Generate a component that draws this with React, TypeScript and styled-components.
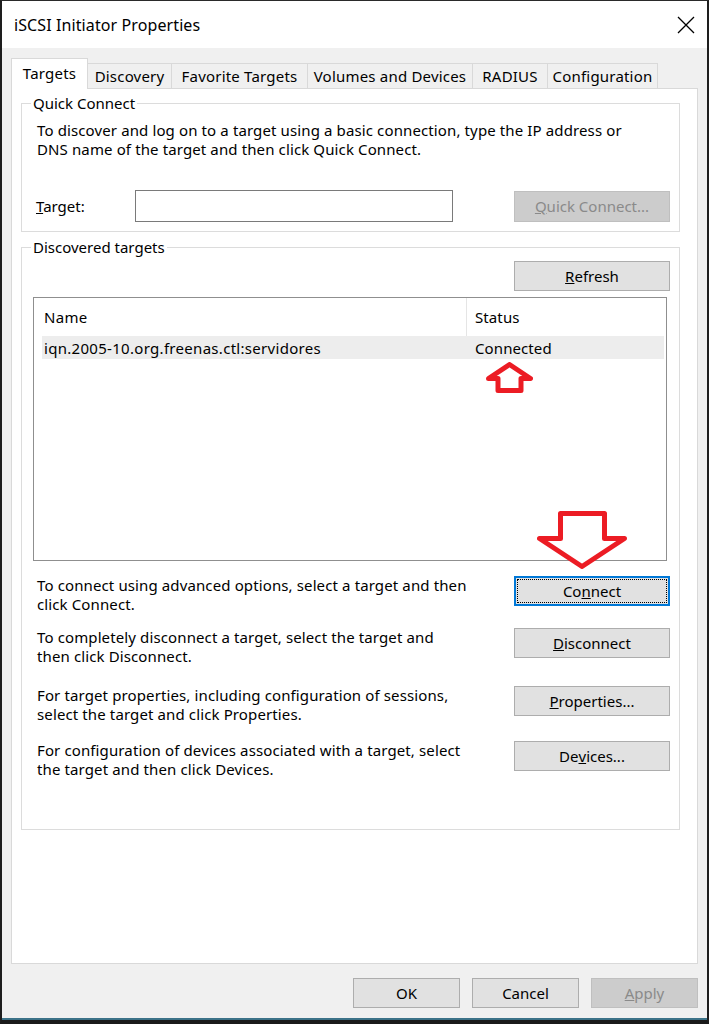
import React from 'react';
import styled, { createGlobalStyle, css } from 'styled-components';

const FONT = `"Noto Sans", "Liberation Sans", Arial, sans-serif`;

const GlobalStyle = createGlobalStyle`
  html, body {
    margin: 0;
    padding: 0;
    background: #ffffff;
  }
  body {
    font-family: ${FONT};
    color: #000000;
  }
  * {
    box-sizing: border-box;
  }
`;

const tabs = [
  { label: 'Targets', width: 77, active: true },
  { label: 'Discovery', width: 84 },
  { label: 'Favorite Targets', width: 136 },
  { label: 'Volumes and Devices', width: 165 },
  { label: 'RADIUS', width: 75 },
  { label: 'Configuration', width: 110 },
];

const actions = [
  {
    lines: ['To connect using advanced options, select a target and then', 'click Connect.'],
    button: (
      <>
        Co<u>n</u>nect
      </>
    ),
    focused: true,
    top: 15,
  },
  {
    lines: ['To completely disconnect a target, select the target and', 'then click Disconnect.'],
    button: (
      <>
        <u>D</u>isconnect
      </>
    ),
    top: 14,
  },
  {
    lines: ['For target properties, including configuration of sessions,', 'select the target and click Properties.'],
    button: (
      <>
        <u>P</u>roperties...
      </>
    ),
    top: 20,
  },
  {
    lines: ['For configuration of devices associated with a target, select', 'the target and then click Devices.'],
    button: (
      <>
        De<u>v</u>ices...
      </>
    ),
    top: 17,
  },
];

function UpArrow() {
  return (
    <svg width="47" height="31" viewBox="0 0 47 31">
      <path
        d="M23.5 2.5 L44.5 16.5 L35 16.5 L35 28.5 L12 28.5 L12 16.5 L2.5 16.5 Z"
        fill="#ffffff"
        stroke="#ec1c24"
        strokeWidth="5"
        strokeLinejoin="round"
      />
    </svg>
  );
}

function DownArrow() {
  return (
    <svg width="90" height="58" viewBox="0 0 90 58">
      <path
        d="M23.5 2.5 L67.5 2.5 L67.5 27.5 L87.5 27.5 L45 55.5 L2.5 27.5 L23.5 27.5 Z"
        fill="#ffffff"
        stroke="#ec1c24"
        strokeWidth="5"
        strokeLinejoin="round"
      />
    </svg>
  );
}

function App() {
  return (
    <>
      <GlobalStyle />
      <Window>
        <TitleBar>
          <Title>iSCSI Initiator Properties</Title>
          <CloseIcon width="18" height="18" viewBox="0 0 18 18">
            <path d="M1 1 L17 17 M17 1 L1 17" stroke="#000000" strokeWidth="1.3" fill="none" />
          </CloseIcon>
        </TitleBar>

        <Body>
          <TabStrip>
            {tabs.map((t) => (
              <Tab key={t.label} $active={!!t.active} $w={t.width}>
                {t.label}
              </Tab>
            ))}
          </TabStrip>

          <TabPanel>
            <GroupBox>
              <Legend>Quick Connect</Legend>
              <Description>
                To discover and log on to a target using a basic connection, type the IP address or
                <br />
                DNS name of the target and then click Quick Connect.
              </Description>
              <TargetRow>
                <FieldLabel>
                  <u>T</u>arget:
                </FieldLabel>
                <TextInput />
                <Spacer />
                <Button $disabled $h={31}>
                  <u>Q</u>uick Connect...
                </Button>
              </TargetRow>
            </GroupBox>

            <DiscoveredGroup>
              <Legend>Discovered targets</Legend>
              <RefreshRow>
                <Button>
                  <u>R</u>efresh
                </Button>
              </RefreshRow>

              <ListBox>
                <ListHeader>
                  <NameCell $header>Name</NameCell>
                  <StatusCell>Status</StatusCell>
                </ListHeader>
                <ListRow>
                  <NameCell>iqn.2005-10.org.freenas.ctl:servidores</NameCell>
                  <StatusCell>Connected</StatusCell>
                </ListRow>
                <UpMarker>
                  <UpArrow />
                </UpMarker>
                <DownMarker>
                  <DownArrow />
                </DownMarker>
              </ListBox>

              {actions.map((a, i) => (
                <ActionRow key={i} $top={a.top}>
                  <ActionText>
                    {a.lines[0]}
                    <br />
                    {a.lines[1]}
                  </ActionText>
                  <Button $focused={!!a.focused}>{a.button}</Button>
                </ActionRow>
              ))}
            </DiscoveredGroup>
          </TabPanel>

          <DialogButtons>
            <Button $w={107}>OK</Button>
            <Button $w={107}>Cancel</Button>
            <Button $w={107} $disabled>
              <u>A</u>pply
            </Button>
          </DialogButtons>
        </Body>
      </Window>
    </>
  );
}

const Window = styled.div`
  width: 709px;
  height: 1024px;
  display: flex;
  flex-direction: column;
  background: #f0f0f0;
  border-top: 1px solid #2a2a2a;
  border-left: 2px solid #1e1e1e;
  border-right: 2px solid #1e1e1e;
  border-bottom: 4px solid #1a1a1a;
`;

const TitleBar = styled.div`
  height: 47px;
  flex-shrink: 0;
  background: #ffffff;
  display: flex;
  align-items: center;
  justify-content: space-between;
  padding: 0 12px 0 12px;
`;

const Title = styled.span`
  font-size: 16px;
  letter-spacing: 0.1px;
  color: #000000;
`;

const CloseIcon = styled.svg`
  display: block;
`;

const Body = styled.div`
  flex: 1;
  display: flex;
  flex-direction: column;
  padding: 10px 9px 10px 9px;
  border-bottom: 2px solid #3c7288;
`;

const TabStrip = styled.div`
  display: flex;
  align-items: flex-end;
  height: 30px;
  position: relative;
  z-index: 1;
`;

const Tab = styled.div<{ $active: boolean; $w: number }>`
  width: ${({ $w }) => $w}px;
  display: flex;
  align-items: center;
  justify-content: center;
  font-size: 15px;
  letter-spacing: 0.2px;
  white-space: nowrap;
  border: 1px solid #d9d9d9;
  ${({ $active }) =>
    $active
      ? css`
          height: 31px;
          margin-bottom: -1px;
          padding-bottom: 3px;
          background: #ffffff;
          border-bottom: none;
        `
      : css`
          height: 25px;
          background: #f0f0f0;
          border-left: none;
          border-bottom: none;
        `}
`;

const TabPanel = styled.div`
  flex: 1;
  display: flex;
  flex-direction: column;
  background: #ffffff;
  border: 1px solid #d9d9d9;
  padding: 5px 17px 0 9px;
`;

const GroupBox = styled.fieldset`
  margin: 0;
  min-width: 0;
  border: 1px solid #dcdcdc;
  padding: 0 9px 9px 11px;
`;

const DiscoveredGroup = styled(GroupBox)`
  margin-top: 6px;
  padding-bottom: 50px;
`;

const Legend = styled.legend`
  font-size: 15px;
  line-height: 18px;
  padding: 0 2px;
  margin-left: -2px;
`;

const Description = styled.div`
  margin-top: 9px;
  padding-left: 4px;
  font-size: 15px;
  line-height: 19px;
  letter-spacing: 0.12px;
  white-space: nowrap;
`;

const TargetRow = styled.div`
  display: flex;
  align-items: center;
  margin-top: 31px;
  padding-left: 3px;
`;

const FieldLabel = styled.label`
  width: 99px;
  font-size: 15px;
`;

const TextInput = styled.div`
  width: 318px;
  height: 32px;
  background: #ffffff;
  border: 1px solid #7a7a7a;
`;

const Spacer = styled.div`
  flex: 1;
`;

const Button = styled.div<{ $disabled?: boolean; $focused?: boolean; $w?: number; $h?: number }>`
  position: relative;
  width: ${({ $w }) => $w ?? 156}px;
  height: ${({ $h }) => $h ?? 30}px;
  flex-shrink: 0;
  display: flex;
  align-items: center;
  justify-content: center;
  font-size: 15px;
  background: #e1e1e1;
  border: 1px solid #adadad;
  color: #000000;
  ${({ $disabled }) =>
    $disabled &&
    css`
      background: #cccccc;
      border-color: #bfbfbf;
      color: #8a8a8a;
    `}
  ${({ $focused }) =>
    $focused &&
    css`
      border: 2px solid #0078d7;
      &::after {
        content: '';
        position: absolute;
        inset: 1px;
        border: 1px dotted #000000;
      }
    `}
`;

const RefreshRow = styled.div`
  display: flex;
  justify-content: flex-end;
  margin-top: 5px;
`;

const ListBox = styled.div`
  position: relative;
  height: 264px;
  margin-top: 6px;
  margin-right: 3px;
  background: #ffffff;
  border: 1px solid #8f8f8f;
`;

const ListHeader = styled.div`
  display: flex;
  align-items: stretch;
  height: 38px;
  margin-left: 8px;
`;

const ListRow = styled.div`
  display: flex;
  align-items: center;
  height: 23px;
  margin: 0 2px 0 8px;
  background: #ededed;
`;

const NameCell = styled.div<{ $header?: boolean }>`
  width: 425px;
  display: flex;
  align-items: center;
  padding-left: 2px;
  font-size: 15px;
  letter-spacing: 0.3px;
  ${({ $header }) =>
    $header &&
    css`
      border-right: 1px solid #e5e5e5;
    `}
`;

const StatusCell = styled.div`
  display: flex;
  align-items: center;
  padding-left: 8px;
  font-size: 15px;
  letter-spacing: 0.1px;
`;

const UpMarker = styled.div`
  position: absolute;
  left: 452px;
  top: 64px;
  line-height: 0;
`;

const DownMarker = styled.div`
  position: absolute;
  left: 503px;
  top: 213px;
  line-height: 0;
`;

const ActionRow = styled.div<{ $top: number }>`
  display: flex;
  align-items: flex-start;
  justify-content: space-between;
  margin-top: ${({ $top }) => $top}px;
  padding-left: 4px;
`;

const ActionText = styled.div`
  font-size: 15px;
  line-height: 19px;
  letter-spacing: 0.12px;
  white-space: nowrap;
`;

const DialogButtons = styled.div`
  display: flex;
  justify-content: flex-end;
  gap: 12px;
  margin-top: 14px;
`;

export default App;
